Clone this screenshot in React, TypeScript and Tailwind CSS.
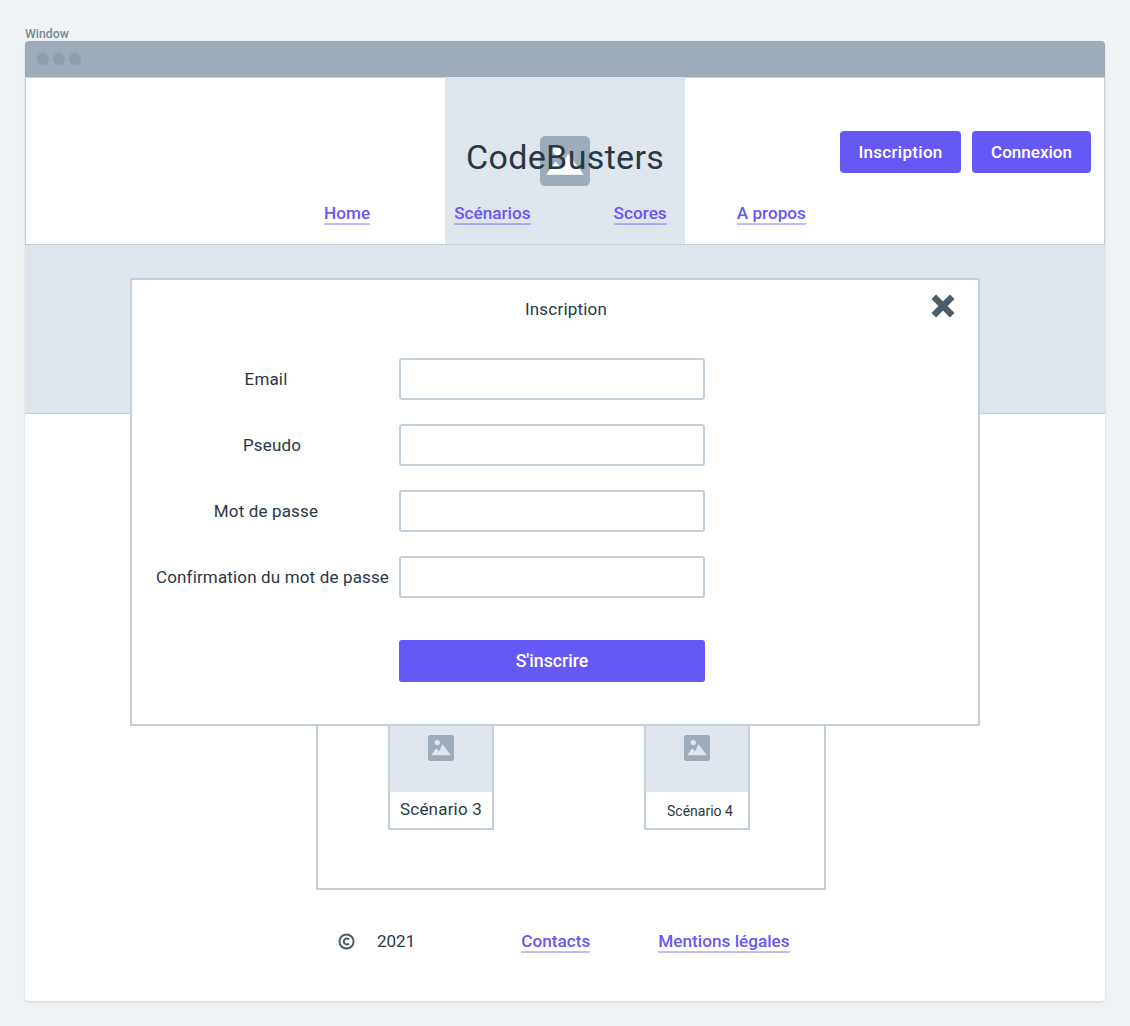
import React from "react";

const ImageIcon = ({ className, mountain }: { className: string; mountain: string }) => (
  <svg viewBox="0 0 24 24" className={className}>
    <rect x="0" y="0" width="24" height="24" rx="2.5" fill="#9dacb8" />
    <circle cx="8.6" cy="7" r="2.4" fill={mountain} />
    <path d="M3 18.6 L7.4 12.2 L10.2 15.2 L13.4 8.4 L21 18.6 Z" fill={mountain} />
  </svg>
);

const NavLink = ({ label, className = "" }: { label: string; className?: string }) => (
  <a className={`inline-block h-[24px] border-b-2 border-[#6558f5]/40 pt-[2px] text-[17.2px] leading-[21px] font-medium text-[#6558f5] ${className}`}>
    {label}
  </a>
);

const Card = ({ label, className = "" }: { label: string; className?: string }) => (
  <div className="flex h-[126px] w-[106px] flex-col border-2 border-[#c3cfd9] bg-white">
    <div className="flex h-[86px] shrink-0 justify-center bg-[#dee5ed] pt-[29px]">
      <ImageIcon className="h-[26px] w-[26px]" mountain="#dee5ed" />
    </div>
    <div className={`text-center text-[#293845] ${className}`}>{label}</div>
  </div>
);

const Field = ({ label, labelClass = "" }: { label: string; labelClass?: string }) => (
  <div className="flex items-center">
    <label className={`w-[232px] pt-[2px] text-center text-[17px] tracking-[0.15px] whitespace-nowrap text-[#293845] ${labelClass}`}>{label}</label>
    <input className="ml-[11px] h-[42px] w-[306px] rounded-[3px] border-2 border-[#c3cfd9] bg-white outline-none" />
  </div>
);

const InscriptionModal = () => (
  <div className="absolute top-[237px] left-[105px] h-[448px] w-[850px] border-2 border-[#c3cfd9] bg-white">
    <button className="absolute top-[13px] right-[22px]">
      <svg viewBox="0 0 24 24" className="h-[26px] w-[26px]">
        <path d="M3.5 3.5 L20.5 20.5 M20.5 3.5 L3.5 20.5" stroke="#4b5c6b" strokeWidth="6" />
      </svg>
    </button>
    <h2 className="pt-[17px] pl-[22px] text-center text-[17px] leading-[24px] tracking-[0.2px] text-[#293845]">Inscription</h2>
    <form className="mt-[37px] ml-[24px] flex flex-col gap-[24px]">
      <Field label="Email" labelClass="pr-[12px]" />
      <Field label="Pseudo" />
      <Field label="Mot de passe" labelClass="pr-[12px]" />
      <Field label="Confirmation du mot de passe" />
    </form>
    <button className="mt-[42px] ml-[267px] h-[42px] w-[306px] rounded-[3px] bg-[#6558f5] text-[17.7px] font-medium text-white">
      S'inscrire
    </button>
  </div>
);

export default function App() {
  return (
    <div className="min-h-[1026px] bg-[#f0f3f6] px-[25px] pt-[27px] font-['Roboto',sans-serif]">
      <p className="h-[14px] text-[12.3px] leading-[14px] font-medium text-[#788896]">Window</p>
      <div className="relative h-[960px] w-[1080px] overflow-hidden rounded-[4px] bg-white shadow-sm">
        <div className="flex h-[36px] items-center gap-[4px] bg-[#9dacb8] pl-[12px]">
          <span className="h-[12px] w-[12px] rounded-full bg-[#8c9dab]" />
          <span className="h-[12px] w-[12px] rounded-full bg-[#8c9dab]" />
          <span className="h-[12px] w-[12px] rounded-full bg-[#8c9dab]" />
        </div>

        <header className="relative h-[168px] border border-[#c3cfd9]">
          <div className="absolute top-[-1px] left-[419px] flex h-[167px] w-[240px] items-start justify-center bg-[#dee5ed] pt-[59px]">
            <ImageIcon className="h-[50px] w-[50px]" mountain="#ffffff" />
            <span className="absolute top-[58px] left-[21px] text-[34px] leading-[44px] tracking-[0.35px] text-[#293845]">CodeBusters</span>
          </div>
          <div className="relative flex justify-end gap-[11px] pt-[53px] pr-[13px]">
            <button className="h-[42px] w-[121px] rounded-[4px] bg-[#6558f5] pt-[1px] text-[17px] tracking-[0.3px] font-medium text-white">Inscription</button>
            <button className="h-[42px] w-[119px] rounded-[4px] bg-[#6558f5] pt-[1px] text-[17px] font-medium text-white">Connexion</button>
          </div>
          <nav className="relative mt-[28px] flex pl-[298px]">
            <NavLink label="Home" />
            <NavLink label="Scénarios" className="ml-[84px]" />
            <NavLink label="Scores" className="ml-[83px]" />
            <NavLink label="A propos" className="ml-[70px]" />
          </nav>
        </header>

        <section className="h-[169px] border-b border-[#c3cfd9] bg-[#dee5ed]" />

        <main className="mt-[26px] ml-[291px] h-[450px] w-[510px] border-2 border-[#c3cfd9] pt-[36px] pl-[70px]">
          <div className="grid w-[362px] grid-cols-[106px_106px] justify-between gap-y-[100px]">
            <Card label="Scénario 1" className="text-[17px] leading-[34px] tracking-[0.2px]" />
            <Card label="Scénario 2" className="text-[17px] leading-[34px] tracking-[0.2px]" />
            <Card label="Scénario 3" className="text-[17px] leading-[34px] tracking-[0.2px]" />
            <Card label="Scénario 4" className="pl-[6px] text-[14px] leading-[38px]" />
          </div>
        </main>

        <footer className="mt-[39px] flex items-center pl-[313px] text-[17px] leading-[24px] text-[#293845]">
          <svg viewBox="0 0 24 24" className="h-[17px] w-[17px]" fill="none" stroke="#4b5c6b" strokeWidth="2.8">
            <circle cx="12" cy="12" r="10" />
            <path d="M15.5 9.2 A4.2 4.2 0 1 0 15.5 14.8" />
          </svg>
          <span className="ml-[22px]">2021</span>
          <NavLink label="Contacts" className="ml-[106px]" />
          <NavLink label="Mentions légales" className="ml-[68px]" />
        </footer>

        <InscriptionModal />
      </div>
    </div>
  );
}
